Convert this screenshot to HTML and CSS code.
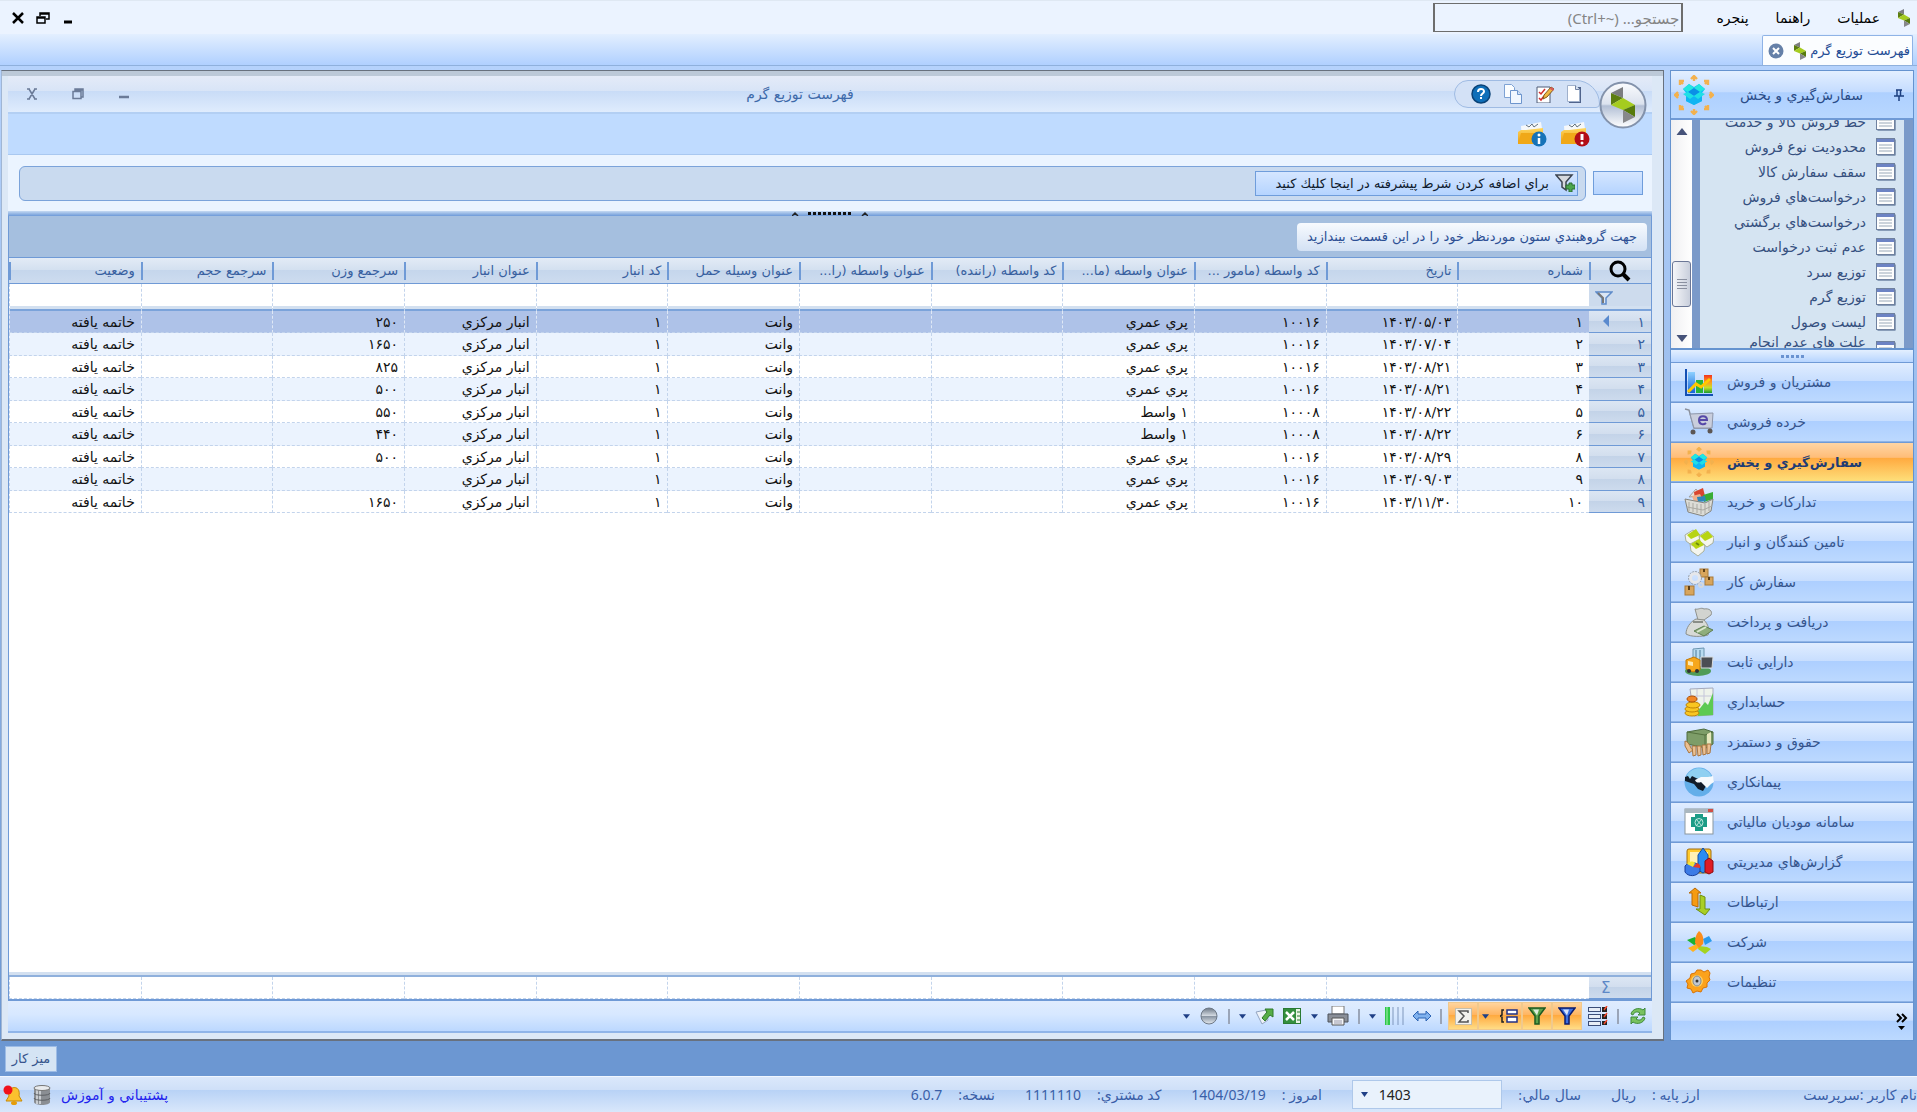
FILE: index.html
```html
<!DOCTYPE html>
<html lang="fa" dir="rtl">
<head>
    <meta charset="UTF-8">
    <meta name="viewport" content="width=device-width, initial-scale=1.0">
    <title>فهرست توزيع گرم</title>
    <link rel="stylesheet" href="styles.css">
</head>
<body>
    <!-- Shared icons -->
    <svg class="sprite" width="0" height="0">
        <defs>
            <linearGradient id="g-gold" x1="0" y1="0" x2="0" y2="1"><stop offset="0" stop-color="#ffd75e"/><stop offset="1" stop-color="#e79a12"/></linearGradient>
            <linearGradient id="g-ball" x1="0" y1="0" x2="0" y2="1"><stop offset="0" stop-color="#6b7785"/><stop offset=".48" stop-color="#d3dae2"/><stop offset=".52" stop-color="#8894a2"/><stop offset="1" stop-color="#e6ebf0"/></linearGradient>
            <linearGradient id="g-round" x1="0" y1="0" x2="0" y2="1"><stop offset="0" stop-color="#fbfcfe"/><stop offset=".48" stop-color="#dbe2ee"/><stop offset=".52" stop-color="#b2bfd5"/><stop offset="1" stop-color="#ffffff"/></linearGradient>
            <linearGradient id="g-rain" x1="0" y1="0" x2="0" y2="1"><stop offset="0" stop-color="#f3341c"/><stop offset=".4" stop-color="#ff9a1f"/><stop offset=".7" stop-color="#c4e02a"/><stop offset="1" stop-color="#1a9c2f"/></linearGradient>
            <linearGradient id="g-blue" x1="0" y1="0" x2="0" y2="1"><stop offset="0" stop-color="#8ed0ff"/><stop offset="1" stop-color="#1464d8"/></linearGradient>
        </defs>
        <symbol id="logo" viewBox="0 0 24 36">
            <path d="M0 6 12 0v11z" fill="#7c7d80"/>
            <path d="M0 6l12 5-12 7z" fill="#5c7d10"/>
            <path d="M12 11l12 7-12 5-12-5z" fill="#a5cc1f"/>
            <path d="M24 18v12l-12-7z" fill="#567a0c"/>
            <path d="M12 23l12 7-12 6z" fill="#87888b"/>
        </symbol>
        <symbol id="box" viewBox="0 0 40 40">
            <g fill="none" stroke="#f3b14e" stroke-width="2.4">
                <path d="M20 6V1m-3 3 3-3 3 3M20 34v5m-3-3 3 3 3-3M5 20H1m3-3-3 3 3 3M35 20h4m-3-3 3 3-3 3M9 9 6 6m0 4V6h4M31 9l3-3m-4 0h4v4M9 31l-3 3m0-4v4h4M31 31l3 3m-4 0h4v-4"/>
            </g>
            <path d="M9 14l6-5 5 3 5-3 6 5-3 4v8l-8 4-8-4v-8z" fill="#11c4f4"/>
            <path d="M9 14l6-5 5 4-6 4zM31 14l-6-5-5 4 6 4z" fill="#23e6e0"/>
            <path d="M14 17l6-4 6 4-6 4z" fill="#0b8fe6"/>
            <path d="M12 18l8 4 8-4v8l-8 4-8-4z" fill="#10b4f3"/>
            <path d="M9 19l5-2 6 4-4 3zM31 19l-5-2-6 4 4 3z" fill="#1fdfe6"/>
        </symbol>
        <symbol id="form" viewBox="0 0 20 18">
            <rect x="1.5" y="1.5" width="18" height="16" fill="#3f567f"/>
            <rect x=".5" y=".5" width="18" height="16" fill="#fdfdfd" stroke="#6f819f"/>
            <rect x="1" y="1" width="17" height="3" fill="#6d83c4"/>
            <path d="M3 7h13M3 10h13M3 13h13" stroke="#9aa9b8"/>
        </symbol>
        <symbol id="folder" viewBox="0 0 30 26">
            <path d="M4 5 24 1l3 20H5z" fill="#f6f8fa"/>
            <path d="M9 4l3 2 3-3 2 3 4-3" fill="none" stroke="#63727f"/>
            <path d="M1 11l3-2h5l17-2v16H1z" fill="url(#g-gold)"/>
            <path d="M1 23 4 12h23l-2 11z" fill="#f0a818"/>
        </symbol>
        <symbol id="funnel" viewBox="0 0 18 18">
            <path d="M1 1h16l-6 8v8H7V9z" stroke-width="1.5"/>
            <path d="M5 2.5l4 6 2-6z" fill="#fff" stroke="none" opacity=".8"/>
        </symbol>
        <symbol id="caret" viewBox="0 0 8 5"><path d="M0 0h8L4 5z"/></symbol>
    </svg>

    <!-- Menu bar -->
    <header class="menubar">
        <svg class="menubar-logo" viewBox="0 0 24 36"><use href="#logo"/></svg>
        <nav class="menu">
            <a href="#">عمليات</a>
            <a href="#">راهنما</a>
            <a href="#">پنجره</a>
        </nav>
        <input class="search" type="text" aria-label="جستجو" placeholder="جستجو... (Ctrl+~&lrm;)">
        <div class="app-controls">
            <button aria-label="كوچك كردن"><svg width="12" height="12" viewBox="0 0 12 12"><path d="M2 10h8" stroke="#000" stroke-width="3"/></svg></button>
            <button aria-label="بازگرداندن"><svg width="14" height="12" viewBox="0 0 14 12"><path d="M4 4V1h9v6h-3M1 5h8v6H1zM1 6h8M4 2h9" fill="none" stroke="#000" stroke-width="1.5"/></svg></button>
            <button aria-label="بستن"><svg width="12" height="12" viewBox="0 0 12 12"><path d="M1 1l10 10M11 1 1 11" stroke="#000" stroke-width="2.5"/></svg></button>
        </div>
    </header>

    <!-- Open document tabs -->
    <div class="tabstrip">
        <div class="tab">
            <span>فهرست توزيع گرم</span>
            <svg width="12" height="18" viewBox="0 0 24 36"><use href="#logo"/></svg>
            <button class="tab-close" aria-label="بستن"><svg width="16" height="16" viewBox="0 0 16 16"><circle cx="8" cy="8" r="7.5" fill="#6580a8"/><path d="M5 5l6 6M11 5l-6 6" stroke="#fff" stroke-width="2"/></svg></button>
        </div>
    </div>

    <main class="workspace">
        <!-- Sidebar -->
        <aside class="sidebar">
            <div class="sidebar-head">
                <svg width="10" height="12" viewBox="0 0 10 12"><path d="M2 1h6M3 1v6M6.5 1v6M0 7h10M5 7v5" fill="none" stroke="#1c3f80" stroke-width="1.5"/></svg>
                <h2>سفارش‌گيري و پخش</h2>
                <svg width="40" height="40"><use href="#box"/></svg>
            </div>
            <div class="tree">
                <ul class="tree-list">
                    <li><a href="#"><svg width="20" height="18"><use href="#form"/></svg>خط فروش كالا و خدمت</a></li>
                    <li><a href="#"><svg width="20" height="18"><use href="#form"/></svg>محدوديت نوع فروش</a></li>
                    <li><a href="#"><svg width="20" height="18"><use href="#form"/></svg>سقف سفارش كالا</a></li>
                    <li><a href="#"><svg width="20" height="18"><use href="#form"/></svg>درخواست‌هاي فروش</a></li>
                    <li><a href="#"><svg width="20" height="18"><use href="#form"/></svg>درخواست‌هاي برگشتي</a></li>
                    <li><a href="#"><svg width="20" height="18"><use href="#form"/></svg>عدم ثبت درخواست</a></li>
                    <li><a href="#"><svg width="20" height="18"><use href="#form"/></svg>توزيع سرد</a></li>
                    <li><a href="#"><svg width="20" height="18"><use href="#form"/></svg>توزيع گرم</a></li>
                    <li><a href="#"><svg width="20" height="18"><use href="#form"/></svg>ليست وصول</a></li>
                    <li class="two-line"><a href="#"><svg width="20" height="18"><use href="#form"/></svg>علت هاي عدم انجام</a></li>
                </ul>
                <div class="scrollbar">
                    <svg class="scroll-up" width="12" height="7" viewBox="0 0 8 5"><use href="#caret"/></svg>
                    <div class="scroll-track">
                        <div class="scroll-thumb"></div>
                    </div>
                    <svg width="12" height="7" viewBox="0 0 8 5"><use href="#caret"/></svg>
                </div>
            </div>
            <div class="sidebar-grip"><i></i><i></i><i></i><i></i><i></i></div>
            <nav class="modules">
                <button>مشتريان و فروش
                    <svg viewBox="0 0 30 30"><path d="M2 2v26h27" fill="none" stroke="#1450b4" stroke-width="2"/><rect x="4" y="5" width="7" height="21" fill="url(#g-blue)"/><rect x="12" y="13" width="7" height="13" fill="#27b43c"/><rect x="20" y="8" width="8" height="18" fill="url(#g-rain)"/><path d="M4 25l8-8 5 3 9-8" fill="none" stroke="#ffc800" stroke-width="3"/></svg>
                </button>
                <button>خرده فروشي
                    <svg viewBox="0 0 30 30"><path d="M1 2l4 1 5 18h17" fill="none" stroke="#8b919c" stroke-width="1.5"/><path d="M6 7l23-1-1 15H10z" fill="#c9cedd" stroke="#8e96aa"/><path d="M15 13h8c0-5-8-5-8 0 0 5 5 5 7 3" fill="none" stroke="#5648a8" stroke-width="2"/><circle cx="9" cy="25" r="2.5" fill="#5c5654"/><circle cx="26" cy="24" r="2.5" fill="#5c5654"/></svg>
                </button>
                <button class="active">سفارش‌گيري و پخش
                    <svg viewBox="0 0 40 40"><use href="#box"/></svg>
                </button>
                <button>تداركات و خريد
                    <svg viewBox="0 0 30 30"><path d="M5 10l7-8 5 7z" fill="#e9e4dc" stroke="#a0a0a0"/><path d="M10 5l9-4 2 8-10 4z" fill="#d9452f"/><path d="M19 8l10-3v7l-9 3z" fill="#39ad35"/><path d="M8 9l8-2 3 6-9 2z" fill="#f0b08c"/><path d="M13 10l8-1 1 5-8 1z" fill="#2e86b8"/><path d="M1 12l20 4 8-4-2 12-8 5L4 25z" fill="#dcdcd6" stroke="#85857e"/><path d="M5 15v9M9 16v9M13 17v9M17 17v10M21 17v10M25 15v9M3 20l16 3 9-4" fill="none" stroke="#aaa9a2"/></svg>
                </button>
                <button>تامين كنندگان و انبار
                    <svg viewBox="0 0 30 30"><path d="M1 8l8-5 7 5-1 7-6 4-7-5zM15 9l8-5 7 6-1 6-6 4-7-5zM6 17l8-4 7 5-1 6-6 5-7-5z" fill="#f4f5ee" stroke="#a9b09b"/><path d="M3 8l9-6 4 6-9 4zM16 9l8-5 5 6-8 4zM7 17l8-5 5 6-8 4z" fill="#b7d413"/><path d="M12 16l3 2" stroke="#6d8a0a" stroke-width="2"/></svg>
                </button>
                <button>سفارش كار
                    <svg viewBox="0 0 30 30"><g fill="#d8a55c" stroke="#a97a38"><rect x="16" y="2" width="8" height="8"/><rect x="21" y="10" width="8" height="8"/><rect x="1" y="19" width="9" height="9"/></g><path d="M20 2v3M25 10v3M5 19v4" stroke="#5d4018" stroke-width="2"/><circle cx="11" cy="11" r="4.5" fill="none" stroke="#e6e7ea" stroke-width="3"/><circle cx="11" cy="11" r="6.5" fill="none" stroke="#9aa1ab" stroke-dasharray="2 1"/><circle cx="17" cy="18" r="2" fill="none" stroke="#d4d7dc" stroke-width="2"/></svg>
                </button>
                <button>دريافت و پرداخت
                    <svg viewBox="0 0 30 30"><path d="M11 2c3 1 6-2 9 0 5-1 9 2 7 6l-7 5h-6z" fill="#d2d4d0" stroke="#8e918d"/><path d="M12 12l8 1c4 4 6 10 4 15-7 2-17 2-22-1 0-6 4-12 10-15z" fill="#d8dad6" stroke="#8c8f8a"/><path d="M9 15h10" stroke="#6f736c" stroke-width="1.5"/><path d="M10 24l10-5 9 4-9 6z" fill="#8fae7d" stroke="#5f7f52"/><path d="M13 25l9-5" stroke="#dbe6cf" stroke-width="2"/></svg>
                </button>
                <button>دارايي ثابت
                    <svg viewBox="0 0 30 30"><ellipse cx="14" cy="24" rx="13" ry="5" fill="#4f9c58"/><path d="M9 2l11-1v15H9z" fill="#b8dbf1" stroke="#6c95b0"/><path d="M12 3v12M16 3v12" stroke="#4c7b9b"/><path d="M17 10h12l-1 11H17z" fill="#4b4e53" stroke="#d9dcdf"/><path d="M2 13l8-3 6 3v10l-7 2-7-3z" fill="#f6a71d" stroke="#c17a08"/><path d="M4 14l5 1v4l-5-1z" fill="#fde9b4"/><circle cx="5" cy="24" r="2" fill="#333"/><circle cx="13" cy="24" r="2" fill="#333"/></svg>
                </button>
                <button>حسابداري
                    <svg viewBox="0 0 30 30"><path d="M6 2l23-1v27l-19 1z" fill="#eef3ea" stroke="#a5a9bb"/><path d="M13 2v20M20 2v20M6 9h22" stroke="#c5c6da"/><path d="M13 25l8-10 3 3 5-12v22l-15 1z" fill="#5dca52"/><g fill="#f9c622" stroke="#bf8507"><ellipse cx="8" cy="26" rx="7" ry="3"/><ellipse cx="8" cy="22" rx="7" ry="3"/><ellipse cx="9" cy="18" rx="7" ry="3"/></g><ellipse cx="8" cy="12" rx="5" ry="3" fill="#f18725" stroke="#ad5006"/></svg>
                </button>
                <button>حقوق و دستمزد
                    <svg viewBox="0 0 30 30"><path d="M3 5l17-3 9 3v12l-7 4-19-4z" fill="#7d9d68" stroke="#4e6c3e"/><path d="M3 5l18 3 8-3M21 8v12" fill="none" stroke="#54713f"/><path d="M23 7l4-2v13l-4 2z" fill="#e6e8bd"/><g fill="#eac092" stroke="#a9753f"><path d="M1 14c5 1 5 8 8 9l-4 3-4-7zM8 19h4v9l-3 1zM13 19h4v9l-3 1zM18 18h4v9l-3 1zM23 17h4l-1 9-3 1z"/></g></svg>
                </button>
                <button>پيمانكاري
                    <svg viewBox="0 0 30 30"><circle cx="15" cy="15" r="14.5" fill="#63aee9"/><path d="M3 8c6-9 18-9 24 0l-3 5H5z" fill="#8fd0f1"/><path d="M1 10l3-1 2 3 2-3 4 2 7 3 3 5-3 5-5-2-4-5-9-3z" fill="#111c28"/><path d="M29 9l-5 1-7 0-6 3c1 3 4 3 6 2l6 6 4-4 3-2z" fill="#f6fafd"/></svg>
                </button>
                <button>سامانه موديان مالياتي
                    <svg viewBox="0 0 30 30"><rect x="1" y="2" width="28" height="25" fill="#fff" stroke="#8b979e"/><rect x="1" y="2" width="28" height="4" fill="#aab7bf"/><rect x="24" y="2" width="5" height="3" fill="#d14f45"/><path d="M11 7h8v3h4v10h-4v4h-8v-4H7V10h4z" fill="#1d9c86"/><circle cx="15" cy="15.5" r="4" fill="none" stroke="#bfe8de"/><path d="M12 12l6 7M18 12l-6 7" stroke="#bfe8de"/></svg>
                </button>
                <button>گزارش‌هاي مديريتي
                    <svg viewBox="0 0 30 30"><rect x="3" y="2" width="24" height="24" rx="2" fill="#ffca2c" stroke="#a06c10"/><rect x="6" y="5" width="18" height="18" fill="#fff1b5"/><path d="M14 8l5-7 5 7v15l-5 3-5-3z" fill="#2b8cf2" stroke="#0f4ca5"/><path d="M21 14l4-3 4 3v11l-4 2-4-2z" fill="#df1c25" stroke="#8d0b12"/><path d="M1 19c4-5 13-4 15 1v4c-3 6-12 6-15 1z" fill="#3c7be6" stroke="#173d9a"/><path d="M9 20l-6-3c2-3 6-3 8-1z" fill="#f4e437"/><path d="M9 20l4-4c3 1 4 3 3 5z" fill="#e83a28"/></svg>
                </button>
                <button>ارتباطات
                    <svg viewBox="0 0 30 30"><path d="M5 6l6-5 6 5h-3v14l-6-2V6z" fill="#f59b12" stroke="#b96a06"/><path d="M16 8l5 2v12h5l-5 6-9-6h4z" fill="#a9cf24" stroke="#6d8f10"/></svg>
                </button>
                <button>شركت
                    <svg viewBox="0 0 30 30"><path d="M3 13l8-3 4 6-5 2z" fill="#1bb22f"/><path d="M19 12l6-3 3 5-7 4z" fill="#2a9bee"/><path d="M4 21l9-4 4 2-8 6z" fill="#ffb21e"/><path d="M15 19l8 1 4 2-6 5-7-5z" fill="#a5d31f"/><path d="M11 16c0-5 1-9 4-12 4 3 5 8 4 13l-4 4z" fill="#fb8d1a"/></svg>
                </button>
                <button>تنظيمات
                    <svg viewBox="0 0 30 30"><path d="M17 3l3 2 4-2 2 3-1 4 1 3-3 3v4l-4 1-2 4-4-1-4 2-2-4-4-1 1-4-2-3 4-3 1-4 4-1 2-3z" fill="#fba21c" stroke="#d87305"/><circle cx="13" cy="14" r="6" fill="#ffcf60"/><ellipse cx="13" cy="14" rx="4" ry="5" fill="#bfc7d1" stroke="#7f8894"/><circle cx="13" cy="14" r="1.5" fill="#333"/></svg>
                </button>
            </nav>
            <div class="sidebar-foot">
                <button aria-label="موارد بيشتر"><svg width="12" height="17" viewBox="0 0 12 17"><path d="M1 1l4 4-4 4M6 1l4 4-4 4" fill="none" stroke="#000" stroke-width="2"/><path d="M2 13h7l-3.5 4z"/></svg></button>
            </div>
        </aside>

        <!-- Document window -->
        <section class="window">
            <div class="titlebar">
                <svg class="round-logo" width="48" height="48" viewBox="0 0 48 48"><circle cx="24" cy="24" r="22.5" fill="url(#g-round)" stroke="#8392ab" stroke-width="2"/><svg x="12" y="5" width="24" height="38" viewBox="0 0 24 36"><use href="#logo"/></svg></svg>
                <div class="quick-access">
                    <button aria-label="جديد"><svg width="14" height="18" viewBox="0 0 14 18"><path d="M2 2h12v16H2z" fill="#50648c"/><path d="M.5.5h8l4 4v12H.5z" fill="#fff" stroke="#9fb0cb"/><path d="M8.5.5v4h4" fill="#d8e2f0" stroke="#7385a6"/></svg></button>
                    <button aria-label="ويرايش"><svg width="18" height="18" viewBox="0 0 18 18"><path d="M1 2h13v16H1z" fill="#fff" stroke="#4e5d78"/><path d="M3 7l2 2 4-5M3 13l2 2 3-4" fill="none" stroke="#d22c2c" stroke-width="1.5"/><path d="M7 14l1-4 7-8 3 2-7 8z" fill="#f0b642" stroke="#80591d"/><path d="M15 2l3 2-1 2-3-2z" fill="#d75a60"/></svg></button>
                    <button aria-label="كپي"><svg width="18" height="20" viewBox="0 0 18 20"><path d="M.5.5h7l3 3v10H.5z" fill="#fbfdff" stroke="#7ea2d4"/><path d="M6.500 6.500h7l4 4v9h-11z" fill="#f1f7ff" stroke="#6d95cd"/><path d="M13.500 6.500v4h4" fill="#cfe1f8" stroke="#6d95cd"/></svg></button>
                    <button aria-label="راهنما"><svg width="20" height="20" viewBox="0 0 20 20"><circle cx="10" cy="10" r="9" fill="#0f6fb9" stroke="#0a4378" stroke-width="1.5"/><path d="M7 8c0-4 6-4 6-.5 0 2-3 2-3 4.500" fill="none" stroke="#fff" stroke-width="2"/><rect x="9" y="13" width="2" height="2" fill="#fff"/></svg></button>
                </div>
                <h1>فهرست توزيع گرم</h1>
                <div class="window-controls">
                    <button aria-label="كوچك كردن"><svg width="12" height="12" viewBox="0 0 12 12"><path d="M1 9h10" stroke="#6b7b98" stroke-width="2.5"/></svg></button>
                    <button aria-label="بزرگ كردن"><svg width="12" height="12" viewBox="0 0 12 12"><path d="M3 3V1h8v8H9M1 3.5h8v7H1zM3 2h8" fill="none" stroke="#6b7b98" stroke-width="1.5"/></svg></button>
                    <button aria-label="بستن"><svg width="12" height="12" viewBox="0 0 12 12"><path d="M3 1l6 10M9 1 3 11M1 1h3M8 1h3M1 11h3M8 11h3" fill="none" stroke="#6b7b98" stroke-width="1.5"/></svg></button>
                </div>
            </div>

            <div class="ribbon">
                <button aria-label="هشدارها"><svg width="30" height="26" viewBox="0 0 30 26"><use href="#folder"/><circle cx="22" cy="18" r="7.5" fill="#b30e17"/><path d="M22 13v6" stroke="#fff" stroke-width="3"/><circle cx="22" cy="22" r="1.5" fill="#fff"/></svg></button>
                <button aria-label="اطلاعات"><svg width="30" height="26" viewBox="0 0 30 26"><use href="#folder"/><circle cx="22" cy="18" r="7.5" fill="#1673b8"/><path d="M22 17v6" stroke="#fff" stroke-width="2.5"/><circle cx="22" cy="14" r="1.5" fill="#fff"/></svg></button>
            </div>

            <div class="conditions">
                <button class="condition-blank" aria-label="شرط"></button>
                <div class="condition-bar">
                    <button class="add-condition">
                        <svg width="20" height="18" viewBox="0 0 20 18"><path d="M1 1h16l-6 7v8l-4-3V8z" fill="#d6d9dd" stroke="#3c4450" stroke-width="1.5"/><path d="M14 9h3v2h3v4h-3v3h-3v-3h-3v-4h3z" fill="#4ba54c" stroke="#2b6d31"/></svg>
                        براي اضافه كردن شرط پيشرفته در اينجا كليك كنيد
                    </button>
                </div>
            </div>

            <div class="splitter"><svg width="76" height="6" viewBox="0 0 76 6"><path d="M0 5l3-3 3 3M70 5l3-3 3 3" fill="none" stroke="#222" stroke-width="1.5"/><path d="M16 2.5h44" stroke="#111" stroke-width="3" stroke-dasharray="3 2"/></svg></div>

            <!-- Grid -->
            <div class="grid">
                <div class="group-panel"><span>جهت گروهبندي ستون موردنظر خود را در اين قسمت بيندازيد</span></div>
                <table class="data">
                    <colgroup><col class="col-row"><col span="12"></colgroup>
                    <thead>
                        <tr class="captions">
                            <th class="corner"><svg width="22" height="22" viewBox="0 0 22 22"><circle cx="9" cy="9" r="7" fill="none" stroke="#000" stroke-width="3"/><path d="M14 14l6 6" stroke="#000" stroke-width="4"/></svg></th>
                            <th>شماره</th>
                            <th>تاريخ</th>
                            <th>كد واسطه (مامور ...</th>
                            <th>عنوان واسطه (ما...</th>
                            <th>كد واسطه (راننده)</th>
                            <th>عنوان واسطه (را...</th>
                            <th>عنوان وسيله حمل</th>
                            <th>كد انبار</th>
                            <th>عنوان انبار</th>
                            <th>سرجمع وزن</th>
                            <th>سرجمع حجم</th>
                            <th>وضعيت</th>
                        </tr>
                        <tr class="filters">
                            <th><svg width="18" height="14" viewBox="0 0 18 14"><path d="M1 1h16l-6 6v6H7V7z" fill="#dbe6f5" stroke="#5e8bc9" stroke-width="1.5"/><path d="M3 2l5 5v5" fill="none" stroke="#777" stroke-width="2"/></svg></th>
                            <td></td><td></td><td></td><td></td><td></td><td></td><td></td><td></td><td></td><td></td><td></td><td></td>
                        </tr>
                    </thead>
                    <tbody>
                        <tr class="selected"><th>۱<svg width="6" height="12" viewBox="0 0 6 12"><path d="M6 0v12L0 6z" fill="#5a8ace"/></svg></th><td>۱</td><td>۱۴۰۳/۰۵/۰۳</td><td>۱۰۰۱۶</td><td>پري عمري</td><td></td><td></td><td>وانت</td><td>۱</td><td>انبار مركزي</td><td>۲۵۰</td><td></td><td>خاتمه يافته</td></tr>
                        <tr><th>۲</th><td>۲</td><td>۱۴۰۳/۰۷/۰۴</td><td>۱۰۰۱۶</td><td>پري عمري</td><td></td><td></td><td>وانت</td><td>۱</td><td>انبار مركزي</td><td>۱۶۵۰</td><td></td><td>خاتمه يافته</td></tr>
                        <tr><th>۳</th><td>۳</td><td>۱۴۰۳/۰۸/۲۱</td><td>۱۰۰۱۶</td><td>پري عمري</td><td></td><td></td><td>وانت</td><td>۱</td><td>انبار مركزي</td><td>۸۲۵</td><td></td><td>خاتمه يافته</td></tr>
                        <tr><th>۴</th><td>۴</td><td>۱۴۰۳/۰۸/۲۱</td><td>۱۰۰۱۶</td><td>پري عمري</td><td></td><td></td><td>وانت</td><td>۱</td><td>انبار مركزي</td><td>۵۰۰</td><td></td><td>خاتمه يافته</td></tr>
                        <tr><th>۵</th><td>۵</td><td>۱۴۰۳/۰۸/۲۲</td><td>۱۰۰۰۸</td><td>۱ واسط</td><td></td><td></td><td>وانت</td><td>۱</td><td>انبار مركزي</td><td>۵۵۰</td><td></td><td>خاتمه يافته</td></tr>
                        <tr><th>۶</th><td>۶</td><td>۱۴۰۳/۰۸/۲۲</td><td>۱۰۰۰۸</td><td>۱ واسط</td><td></td><td></td><td>وانت</td><td>۱</td><td>انبار مركزي</td><td>۴۴۰</td><td></td><td>خاتمه يافته</td></tr>
                        <tr><th>۷</th><td>۸</td><td>۱۴۰۳/۰۸/۲۹</td><td>۱۰۰۱۶</td><td>پري عمري</td><td></td><td></td><td>وانت</td><td>۱</td><td>انبار مركزي</td><td>۵۰۰</td><td></td><td>خاتمه يافته</td></tr>
                        <tr><th>۸</th><td>۹</td><td>۱۴۰۳/۰۹/۰۳</td><td>۱۰۰۱۶</td><td>پري عمري</td><td></td><td></td><td>وانت</td><td>۱</td><td>انبار مركزي</td><td></td><td></td><td>خاتمه يافته</td></tr>
                        <tr><th>۹</th><td>۱۰</td><td>۱۴۰۳/۱۱/۳۰</td><td>۱۰۰۱۶</td><td>پري عمري</td><td></td><td></td><td>وانت</td><td>۱</td><td>انبار مركزي</td><td>۱۶۵۰</td><td></td><td>خاتمه يافته</td></tr>
                    </tbody>
                </table>
                <div class="grid-space"></div>
                <table class="data totals">
                    <colgroup><col class="col-row"><col span="12"></colgroup>
                    <tbody>
                        <tr><th>Σ</th><td></td><td></td><td></td><td></td><td></td><td></td><td></td><td></td><td></td><td></td><td></td><td></td></tr>
                    </tbody>
                </table>
            </div>

            <!-- Grid toolbar -->
            <div class="grid-tools">
                <button aria-label="بازخواني"><svg width="20" height="20" viewBox="0 0 20 20"><path d="M3 8c1-5 8-7 12-4l2-2v7h-7l2-2c-3-2-6-1-7 2zM17 12c-1 5-8 7-12 4l-2 2v-7h7l-2 2c3 2 6 1 7-2z" fill="#79c25f" stroke="#3f8a3c"/></svg></button>
                <hr>
                <button aria-label="انتخاب ستون"><svg width="20" height="20" viewBox="0 0 20 20"><g fill="#e7edf6" stroke="#3b4d78"><rect x=".5" y="1.5" width="12" height="4"/><rect x=".5" y="8.5" width="12" height="4"/><rect x=".5" y="15.5" width="12" height="4"/></g><g fill="#222"><rect x="14" y="1" width="5" height="5"/><rect x="14" y="8" width="5" height="5"/><rect x="14" y="15" width="5" height="4"/></g><path d="M16 4l3-4M16 11l3-4M16 18l3-4" stroke="#f0472a" stroke-width="1.5"/></svg></button>
                <div class="toggled">
                    <button aria-label="فيلتر"><svg width="18" height="18" fill="#3b6fe0" stroke="#0c1c6e"><use href="#funnel"/></svg></button>
                    <button aria-label="فيلتر پيشرفته"><svg width="18" height="18" fill="#5aa04a" stroke="#1d5a22"><use href="#funnel"/></svg></button>
                    <button class="wide" aria-label="گروهبندي"><svg width="18" height="14" viewBox="0 0 18 14"><path d="M4 1H2v5l-2 1 2 1v5h2" fill="none" stroke="#222" stroke-width="1.5"/><rect x="7" y="1" width="10" height="4" fill="#fff" stroke="#223084" stroke-width="1.5"/><rect x="7" y="8" width="10" height="5" fill="#fff" stroke="#223084" stroke-width="1.5"/></svg><svg class="caret" width="7" height="5"><use href="#caret"/></svg></button>
                    <button aria-label="جمع"><svg width="17" height="17" viewBox="0 0 17 17"><rect x=".5" y=".5" width="16" height="16" fill="#f3f2ee" stroke="#c5bfae"/><path d="M13 5V3H4l5 5-5 6h9v-2" fill="none" stroke="#555" stroke-width="1.5"/></svg></button>
                </div>
                <hr>
                <button aria-label="عرض ستون‌ها"><svg width="18" height="12" viewBox="0 0 18 12"><path d="M0 6l5-5v3h8V1l5 5-5 5V8H5v3z" fill="#7fb1ee" stroke="#2c64b4"/></svg></button>
                <button aria-label="ستون ثابت"><svg width="19" height="18" viewBox="0 0 19 18"><rect width="5" height="18" fill="#2fc84a"/><path d="M2 0v18" stroke="#a7f0b0"/><path d="M8 0v18M13 0v18M18 0v18" stroke="#7f97bd"/></svg></button>
                <svg class="caret" width="7" height="5"><use href="#caret"/></svg>
                <hr>
                <button aria-label="چاپ"><svg width="22" height="20" viewBox="0 0 22 20"><path d="M5 0h12v8H5z" fill="#fff" stroke="#777"/><path d="M1 8h20v8H1z" fill="#8a8f98" stroke="#4d525b"/><path d="M5 12h12v7H5z" fill="#f5f6f8" stroke="#555"/><path d="M7 15h8M7 17h8" stroke="#99a"/></svg></button>
                <svg class="caret" width="7" height="5"><use href="#caret"/></svg>
                <button aria-label="اكسل"><svg width="19" height="18" viewBox="0 0 19 18"><rect x=".5" y="1.5" width="17" height="15" fill="#e9f5e4" stroke="#2b7a33"/><rect x="1" y="2" width="12" height="14" fill="#348f3e"/><path d="M3 5l8 8M11 5l-8 8" stroke="#fff" stroke-width="2.5"/><path d="M14 5h3M14 9h3M14 13h3" stroke="#2b7a33"/></svg></button>
                <button aria-label="ارسال"><svg width="19" height="18" viewBox="0 0 19 18"><path d="M1 5l10-2 2 10-6 4z" fill="#eef2f8" stroke="#93a4c0"/><path d="M10 2h8v8l-3-2-5 6-3-3 5-6z" fill="#58ad46" stroke="#2f7a2a"/></svg></button>
                <svg class="caret" width="7" height="5"><use href="#caret"/></svg>
                <hr>
                <button aria-label="نما"><svg width="20" height="18" viewBox="0 0 20 18"><circle cx="10" cy="9" r="8" fill="url(#g-ball)" stroke="#6d7886"/></svg></button>
                <svg class="caret" width="7" height="5"><use href="#caret"/></svg>
            </div>
        </section>
    </main>

    <div class="taskbar">
        <button>ميز كار</button>
    </div>

    <!-- Status bar -->
    <footer class="statusbar">
        <div class="status-item user">نام كاربر :سرپرست</div>
        <div class="status-item"><span>ارز پايه :</span><span>ريال</span></div>
        <div class="status-item">
            <label for="fiscal-year">سال مالي:</label>
            <select id="fiscal-year"><option>1403</option></select>
        </div>
        <div class="status-item"><span>امروز :</span><span>1404/03/19</span></div>
        <div class="status-item"><span>كد مشتري:</span><span>1111110</span></div>
        <div class="status-item"><span>نسخه:</span><span>6.0.7</span></div>
        <div class="support">
            <a href="#">پشتيباني و آموزش</a>
            <svg width="18" height="20" viewBox="0 0 18 20"><path d="M1 3v14c0 4 16 4 16 0V3z" fill="#8a8e93"/><path d="M4 4v15M7 4v15" stroke="#c9cdd1" stroke-width="2"/><path d="M1 8c0 3 16 3 16 0M1 13c0 3 16 3 16 0" fill="none" stroke="#5d6064"/><ellipse cx="9" cy="3" rx="8" ry="2.5" fill="#e9ebed" stroke="#777"/></svg>
            <svg width="20" height="20" viewBox="0 0 20 20"><path d="M9 3c6-2 8 3 7 8l3 5H3l3-5c-1-3 0-7 3-8z" fill="#fbc02e" stroke="#c98b06"/><ellipse cx="11" cy="18" rx="3" ry="2" fill="#e59d0a"/><circle cx="5" cy="5" r="4.5" fill="#f0111b"/></svg>
        </div>
    </footer>
</body>
</html>
```
FILE: styles.css
```css
* {
    margin: 0;
    padding: 0;
    box-sizing: border-box;
    font-family: "DejaVu Sans", sans-serif;
}

body {
    display: flex;
    flex-direction: column;
    height: 100vh;
    overflow: hidden;
    background-color: #6c97d2;
    color: #35548c;
    font-size: 14px;
}

button {
    display: flex;
    align-items: center;
    justify-content: center;
    background: none;
    border: none;
    color: inherit;
    font-size: inherit;
    cursor: pointer;
}

a {
    color: inherit;
    text-decoration: none;
}

ul {
    list-style: none;
}

svg {
    display: block;
    flex-shrink: 0;
}

.sprite {
    position: absolute;
}

.caret {
    fill: #1f3f86;
}

/* Menu bar */
.menubar {
    display: flex;
    align-items: center;
    height: 34px;
    padding: 0 7px 0 12px;
    background-color: #ebf3ff;
    border-top: 1px solid #dfe8f3;
}

.menubar-logo {
    width: 12px;
    height: 18px;
}

.menu {
    display: flex;
    gap: 27px;
    margin: 0 18px 0 33px;
    color: #000;
}

.search {
    width: 250px;
    height: 29px;
    padding: 0 2px;
    background-color: #ebf3ff;
    border: 2px solid #6d6d6d;
    border-width: 1px 2px;
    font-family: "Noto Sans", "DejaVu Sans", sans-serif;
    font-size: 15px;
}

.search::placeholder {
    color: #858585;
}

.app-controls {
    display: flex;
    gap: 12px;
    margin-right: auto;
}

/* Tabs */
.tabstrip {
    display: flex;
    align-items: flex-end;
    height: 32px;
    padding-right: 4px;
    background: linear-gradient(#e3efff, #b0d0ff);
    border-bottom: 1px solid #8fb0dc;
}

.tab {
    display: flex;
    align-items: center;
    gap: 4px;
    height: 30px;
    padding: 0 2px 0 5px;
    background-color: #fbfdff;
    border: 1px solid #8fb3e6;
    border-bottom: none;
    border-radius: 2px 2px 0 0;
    color: #1f4b94;
    font-size: 13px;
}

.tab-close {
    margin-right: 6px;
}

/* Workspace */
.workspace {
    display: flex;
    flex: 1;
    gap: 6px;
    min-height: 0;
    padding: 4px 3px 0 1px;
    background: linear-gradient(#b5d2fc, #6c97d2);
}

.sidebar {
    display: flex;
    flex-direction: column;
    width: 244px;
    border: 1px solid #6593cf;
}

.sidebar-head {
    display: flex;
    align-items: center;
    height: 49px;
    padding: 0 9px 0 3px;
    background: linear-gradient(#e3efff, #c4dcff 45%, #aed0ff 46%, #b8d7ff);
    border-bottom: 2px solid #6f9ad6;
}

.sidebar-head h2 {
    flex: 1;
    padding-right: 31px;
    color: #2a4c88;
    font-size: 14px;
    font-weight: normal;
}

.tree {
    display: flex;
    height: 230px;
    background-color: #7b9ac9;
    border-bottom: 2px solid #6593cf;
}

.tree-list {
    display: flex;
    flex: 1;
    flex-direction: column;
    justify-content: center;
    margin: 0 9px 0 8px;
    overflow: hidden;
    background-color: #d5e4f2;
    color: #35507f;
}

.tree-list a {
    display: flex;
    align-items: center;
    gap: 10px;
    height: 25px;
    padding-right: 8px;
}

.tree-list .two-line a {
    align-items: flex-start;
}

.tree-list .two-line svg {
    align-self: flex-end;
}

.scrollbar {
    display: flex;
    flex-direction: column;
    align-items: center;
    width: 21px;
    padding: 8px 0 6px;
    background: linear-gradient(to right, #f0f0f2, #fff);
    fill: #46537a;
}

.scroll-up {
    transform: rotate(180deg);
}

.scroll-track {
    display: flex;
    flex: 1;
    flex-direction: column;
    justify-content: flex-end;
    padding-bottom: 28px;
}

.scroll-thumb {
    width: 19px;
    height: 46px;
    background: repeating-linear-gradient(#8a90a0 0 1px, transparent 1px 3px) center / 10px 10px no-repeat, linear-gradient(to right, #f5f6f9, #c9cfdc);
    border: 1px solid #6b7796;
    border-radius: 3px;
}

.sidebar-grip {
    display: flex;
    align-items: center;
    justify-content: center;
    gap: 2px;
    height: 12px;
    background: linear-gradient(#e3efff, #b7d5ff);
}

.sidebar-grip i {
    width: 3px;
    height: 3px;
    background-color: #6a93d1;
}

.modules button {
    justify-content: flex-end;
    gap: 13px;
    width: 100%;
    height: 40px;
    padding-left: 13px;
    background: linear-gradient(#e0edff, #c8defe 47%, #adcfff 48%, #bcd9ff);
    border-top: 1px solid #6f9ad6;
    border-bottom: 1px solid #8fb4e6;
}

.modules svg {
    width: 30px;
    height: 30px;
}

.modules .active {
    background: linear-gradient(#ffd5a4, #ffbd78 38%, #ffa93f 39%, #fedf7a);
    color: #1d3c74;
    font-size: 13px;
    font-weight: bold;
}

.sidebar-foot {
    display: flex;
    flex: 1;
    align-items: center;
    padding-right: 5px;
    background: linear-gradient(#e0edff, #c8defe 47%, #adcfff 48%, #bcd9ff);
    border-top: 1px solid #6f9ad6;
}

/* Document window */
.window {
    display: flex;
    flex: 1;
    flex-direction: column;
    min-width: 0;
    padding: 5px 11px 6px 6px;
    background-color: #dce8f6;
    border: 1px solid #68717e;
    border-left-color: #a0b6d4;
    border-bottom-width: 2px;
    box-shadow: inset 0 5px #bcc9d8;
}

.titlebar {
    position: relative;
    display: flex;
    align-items: center;
    height: 38px;
    background: linear-gradient(#e4ebf8, #d8e4f7 42%, #c9dcf7 43%, #dfecfd);
    border-bottom: 2px solid #b3cff3;
}

.round-logo {
    position: absolute;
    top: 5px;
    right: 5px;
}

.quick-access {
    display: flex;
    align-items: center;
    justify-content: space-between;
    width: 146px;
    height: 28px;
    margin-right: 52px;
    padding: 0 18px 0 16px;
    background-color: #d3e1f6;
    border: 1px solid #9fbbe3;
    border-radius: 14px 24px 4px 14px;
}

.titlebar h1 {
    flex: 1;
    padding-left: 38px;
    color: #3e6aaa;
    font-size: 14px;
    font-weight: normal;
    text-align: center;
}

.titlebar h1 {
    padding-right: 22px;
}

.window-controls {
    display: flex;
    gap: 34px;
    padding-left: 18px;
}

.ribbon {
    display: flex;
    align-items: center;
    gap: 13px;
    height: 41px;
    padding-right: 62px;
    background-color: #bfdbff;
    border-bottom: 1px solid #a9c8f0;
}

.conditions {
    display: flex;
    align-items: center;
    gap: 7px;
    height: 56px;
    padding: 0 9px 0 11px;
    background-color: #ebf4ff;
}

.condition-blank {
    width: 50px;
    height: 24px;
    background: linear-gradient(#d5e6ff, #b5d4ff);
    border: 1px solid #6f9ddb;
}

.condition-bar {
    display: flex;
    flex: 1;
    align-items: center;
    height: 35px;
    padding-right: 7px;
    background-color: #c9daef;
    border: 1px solid #7ba3da;
    border-radius: 6px;
}

.add-condition {
    gap: 6px;
    height: 25px;
    padding: 0 2px 0 20px;
    background: linear-gradient(#d5e6ff, #b5d4ff);
    border: 1px solid #6f9ddb;
    color: #0f1a2c;
    font-size: 13px;
}

.splitter {
    display: flex;
    align-items: center;
    justify-content: center;
    height: 5px;
    background: linear-gradient(#c5d9f3, #6d9ad8);
}

/* Grid */
.grid {
    display: flex;
    flex: 1;
    flex-direction: column;
    min-height: 0;
    background-color: #fff;
    border: 2px solid #6f9ad6;
    border-width: 0 1px 2px;
}

.group-panel {
    display: flex;
    align-items: center;
    height: 41px;
    padding-right: 4px;
    background-color: #a5bfdf;
}

.group-panel span {
    padding: 0 10px;
    background: linear-gradient(#f7fafe, #d3e1f4);
    border-radius: 4px;
    color: #2c4f94;
    font-size: 13px;
    line-height: 28px;
}

.data {
    width: 100%;
    table-layout: fixed;
    border-spacing: 0;
}

.col-row {
    width: 62px;
}

.data th,
.data td {
    height: 22px;
    padding: 0 6px;
    font-weight: normal;
    line-height: 18px;
    text-align: right;
    white-space: nowrap;
    overflow: hidden;
}

.data td {
    border-left: 1px dashed #c3d4ec;
    border-bottom: 1px dashed #c3d4ec;
    color: #111;
}

.data th {
    background: linear-gradient(#dce6f3, #d2deee 48%, #c3d3e8 49%, #cddbed);
    color: #375f9f;
}

.data .captions th {
    height: 27px;
    background: linear-gradient(#6f9ad6, #6f9ad6) left center / 2px 18px no-repeat, linear-gradient(#e3ebf6, #d3e0f0 48%, #c5d6ec 49%, #cddcef);
    border-top: 1px solid #6f9ad6;
    border-bottom: 1px solid #6f9ad6;
    font-size: 13px;
}

.data .corner svg {
    margin: 0 auto;
}

.data .filters th,
.data .filters td {
    height: 27px;
    border-bottom: none;
    background: linear-gradient(#d3e0f0 0 3px, #7ba3da 3px 5px) bottom / 100% 5px no-repeat;
}

.data .filters th {
    background-color: #cddbed;
}

.data .filters svg {
    margin-right: auto;
}

.data tbody th {
    border-bottom: 1px solid #6f9ad6;
}

.data tbody th svg {
    display: inline-block;
    margin-right: 28px;
}

.data tbody tr:nth-child(even) td {
    background-color: #ebf3fe;
}

.data tbody tr:nth-child(even) > * {
    height: 23px;
}

.data tbody tr.selected td {
    background-color: #aec2e8;
    border-left-color: #dfe8f6;
}

.grid-space {
    flex: 1;
    border-bottom: 3px solid #d3e0f0;
}

.totals {
    border-top: 2px solid #8fb0dc;
}

.data.totals th {
    height: 22px;
    padding-left: 12px;
    color: #5d88c6;
    font-size: 15px;
    text-align: left;
}

/* Grid toolbar */
.grid-tools {
    display: flex;
    align-items: center;
    gap: 9px;
    height: 32px;
    padding-right: 4px;
    background: linear-gradient(#e0ecfe, #d7e8ff 45%, #bcd8ff);
    border-bottom: 2px solid #8fb4e8;
}

.grid-tools hr {
    width: 2px;
    height: 15px;
    border: none;
    background-color: #9aa5b8;
}

.toggled {
    display: flex;
    margin: 0 -3px;
    background: linear-gradient(#ffd7a3, #ffb561 45%, #ffa83d 46%, #ffe08b);
}

.toggled button {
    width: 30px;
    height: 28px;
    border: 1px solid #f0c98d;
}

.toggled .wide {
    gap: 11px;
    width: 44px;
}

/* Taskbar and status bar */
.taskbar {
    display: flex;
    align-items: center;
    justify-content: flex-end;
    height: 35px;
    padding-left: 5px;
}

.taskbar button {
    width: 52px;
    height: 26px;
    background-color: #d5e4f4;
    border: 1px solid #9dbce6;
    font-size: 13px;
}

.statusbar {
    display: flex;
    align-items: center;
    gap: 30px;
    height: 36px;
    padding-left: 3px;
    background: linear-gradient(#dbe8fb, #cfe0f8 36%, #b8d2f6 37%, #d9e7fb);
    border-top: 1px solid #f0f6ff;
    color: #3a5fa8;
    white-space: nowrap;
}

.status-item {
    display: flex;
    align-items: center;
    gap: 16px;
    font-family: "Noto Sans", "DejaVu Sans", sans-serif;
}

.status-item span {
    font-family: inherit;
}

.user {
    width: 187px;
}

.statusbar select {
    width: 150px;
    height: 29px;
    padding-left: 26px;
    appearance: none;
    direction: ltr;
    background: #e9f2fc url("data:image/svg+xml,%3Csvg xmlns='http://www.w3.org/2000/svg' width='7' height='5'%3E%3Cpath d='M0 0h7L3.5 5z' fill='%231f3f86'/%3E%3C/svg%3E") 8px center no-repeat;
    border: 1px solid #aec8ea;
    color: #222;
    font-family: "Noto Sans", sans-serif;
    font-size: 14px;
}

.support {
    display: flex;
    align-items: center;
    gap: 10px;
    margin-right: auto;
    color: #2222ee;
}
```
